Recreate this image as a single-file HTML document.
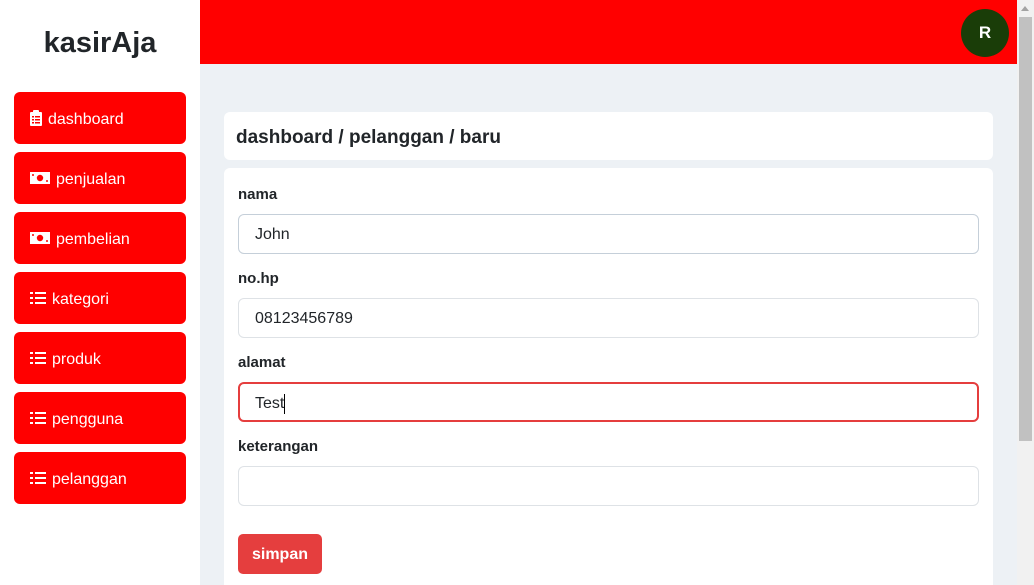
<!DOCTYPE html>
<html><head><meta charset="utf-8"><style>
*{box-sizing:border-box;margin:0;padding:0}
html,body{width:1034px;height:585px;overflow:hidden}
body{font-family:"Segoe UI","Liberation Sans",sans-serif;background:#edf1f5;position:relative}
.side{position:absolute;left:0;top:0;width:200px;height:585px;background:#fff}
.logo{position:absolute;left:0;width:200px;top:27px;text-align:center;font-size:29px;font-weight:bold;color:#212529}
.btn{position:absolute;left:14px;width:172px;height:52px;background:#f00;border-radius:6px;color:#fff;font-size:16px;display:flex;align-items:center;padding-left:16px;padding-top:4px}
.btn svg{margin-right:6px;margin-top:-4px}
.top{position:absolute;left:200px;top:0;width:817px;height:64px;background:#f00}
.av{position:absolute;left:961px;top:9px;width:48px;height:48px;border-radius:50%;background:#1a3d08;color:#fff;font-weight:bold;font-size:17px;text-align:center;line-height:48px}
.sb{position:absolute;left:1017px;top:0;width:17px;height:585px;background:#f1f1f1}
.th{position:absolute;left:2px;top:17px;width:13px;height:424px;background:#c1c1c1}
.card{position:absolute;left:224px;width:769px;background:#fff;border-radius:6px}
.bc{top:112px;height:48px;font-size:19px;font-weight:bold;color:#212529;padding:15px 12px 0}
.form{top:168px;height:417px;border-radius:6px 6px 0 0}
label{position:absolute;left:14px;font-weight:bold;font-size:15px;color:#212529}
.in{position:absolute;left:14px;width:741px;height:40px;border:1px solid #dee2e6;border-radius:6px;font-size:16px;color:#212529;padding:11px 16px 0}
.sim{position:absolute;left:14px;top:366px;width:84px;height:40px;background:#e53e3e;color:#fff;font-weight:bold;font-size:16px;border-radius:5px;text-align:center;line-height:42px}
</style></head><body>
<div class="side"><div class="logo">kasirAja</div>
<div class="btn" style="top:92px"><svg width="12" height="16" viewBox="0 0 12 16"><rect x="0" y="2" width="12" height="14" rx="1" fill="#fff"/><rect x="3" y="0" width="6" height="4" rx="1" fill="#fff"/><g fill="#f00"><rect x="2" y="6" width="2" height="1.5"/><rect x="5" y="6" width="5" height="1.5"/><rect x="2" y="9" width="2" height="1.5"/><rect x="5" y="9" width="5" height="1.5"/><rect x="2" y="12" width="2" height="1.5"/><rect x="5" y="12" width="5" height="1.5"/></g></svg>dashboard</div>
<div class="btn" style="top:152px"><svg width="20" height="14" viewBox="0 0 20 14"><rect x="0" y="1" width="20" height="12" fill="#fff"/><circle cx="10" cy="7" r="3.2" fill="#f00"/><circle cx="3" cy="4" r="1" fill="#f00"/><circle cx="17" cy="10" r="1" fill="#f00"/></svg>penjualan</div>
<div class="btn" style="top:212px"><svg width="20" height="14" viewBox="0 0 20 14"><rect x="0" y="1" width="20" height="12" fill="#fff"/><circle cx="10" cy="7" r="3.2" fill="#f00"/><circle cx="3" cy="4" r="1" fill="#f00"/><circle cx="17" cy="10" r="1" fill="#f00"/></svg>pembelian</div>
<div class="btn" style="top:272px"><svg width="16" height="14" viewBox="0 0 16 14"><g fill="#fff"><rect x="0" y="1" width="3" height="2"/><rect x="5" y="1" width="11" height="2"/><rect x="0" y="6" width="3" height="2"/><rect x="5" y="6" width="11" height="2"/><rect x="0" y="11" width="3" height="2"/><rect x="5" y="11" width="11" height="2"/></g></svg>kategori</div>
<div class="btn" style="top:332px"><svg width="16" height="14" viewBox="0 0 16 14"><g fill="#fff"><rect x="0" y="1" width="3" height="2"/><rect x="5" y="1" width="11" height="2"/><rect x="0" y="6" width="3" height="2"/><rect x="5" y="6" width="11" height="2"/><rect x="0" y="11" width="3" height="2"/><rect x="5" y="11" width="11" height="2"/></g></svg>produk</div>
<div class="btn" style="top:392px"><svg width="16" height="14" viewBox="0 0 16 14"><g fill="#fff"><rect x="0" y="1" width="3" height="2"/><rect x="5" y="1" width="11" height="2"/><rect x="0" y="6" width="3" height="2"/><rect x="5" y="6" width="11" height="2"/><rect x="0" y="11" width="3" height="2"/><rect x="5" y="11" width="11" height="2"/></g></svg>pengguna</div>
<div class="btn" style="top:452px"><svg width="16" height="14" viewBox="0 0 16 14"><g fill="#fff"><rect x="0" y="1" width="3" height="2"/><rect x="5" y="1" width="11" height="2"/><rect x="0" y="6" width="3" height="2"/><rect x="5" y="6" width="11" height="2"/><rect x="0" y="11" width="3" height="2"/><rect x="5" y="11" width="11" height="2"/></g></svg>pelanggan</div>
</div>
<div class="top"></div>
<div class="av">R</div>
<div class="card bc">dashboard / pelanggan / baru</div>
<div class="card form">
<label style="top:18px">nama</label>
<div class="in" style="top:46px;border-color:#c5cfd9">John</div>
<label style="top:102px">no.hp</label>
<div class="in" style="top:130px">08123456789</div>
<label style="top:186px">alamat</label>
<div class="in" style="top:214px;border:2px solid #e53e3e;padding:10px 15px 0">Test<span style="display:inline-block;width:1px;height:20px;background:#000;vertical-align:middle"></span></div>
<label style="top:270px">keterangan</label>
<div class="in" style="top:298px"></div>
<div class="sim">simpan</div>
</div>
<div class="sb"><div class="th"></div><div style="position:absolute;left:4px;top:6px;border:4px solid transparent;border-bottom:5px solid #a3a3a3;border-top:0"></div></div>
</body></html>
